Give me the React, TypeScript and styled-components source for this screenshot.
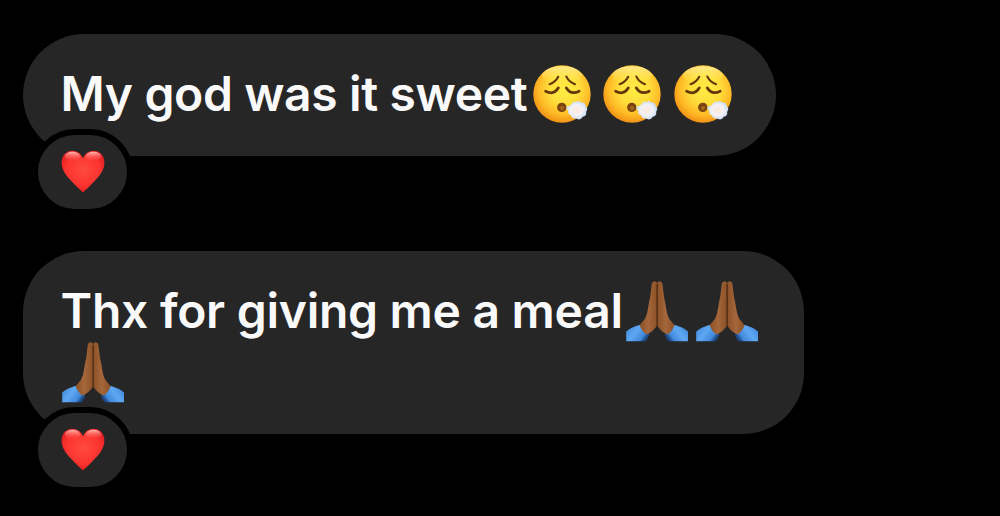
import React from "react";
import styled, { createGlobalStyle } from "styled-components";

const GlobalStyle = createGlobalStyle`
  * {
    box-sizing: border-box;
  }
  body {
    margin: 0;
    background-color: #000000;
    font-family: Inter, "Liberation Sans", sans-serif;
  }
`;

const Thread = styled.main`
  display: flex;
  flex-direction: column;
  align-items: flex-start;
  gap: 95px;
  height: 516px;
  padding: 34px 0 0 23px;
  overflow: hidden;
`;
const Bubble = styled.div<{ $width: number }>`
  position: relative;
  width: ${(props) => props.$width}px;
  padding: 30.5px 35px;
  border-radius: 61px;
  background-color: #262626;
`;
const Message = styled.p`
  display: flex;
  flex-wrap: wrap;
  margin: 0;
`;
const Text = styled.span<{ $width: number; $spacing: number }>`
  width: ${(props) => props.$width}px;
  height: 61px;
  padding-left: 2.5px;
  color: #f9f9f9;
  font-size: 48px;
  font-weight: 600;
  line-height: 57px;
  letter-spacing: ${(props) => props.$spacing}px;
  white-space: nowrap;
`;
const Emoji = styled.svg`
  display: block;
  flex: none;
  width: 70.4px;
  height: 61px;
  overflow: visible;
`;
const Reaction = styled.div`
  position: absolute;
  left: 9px;
  bottom: -58.5px;
  display: flex;
  align-items: center;
  justify-content: center;
  width: 101px;
  height: 85.5px;
  border: 6px solid #000000;
  border-radius: 43px;
  background-color: #262626;
`;
const HeartIcon = styled.svg`
  display: block;
  width: 44px;
  height: 43px;
`;

function Exhaling() {
  return (
    <Emoji viewBox="0 0 70.4 61">
      <defs>
        <radialGradient id="face" cx="0.54" cy="0.42" r="0.6">
          <stop offset="0" stopColor="#ffec45" />
          <stop offset="0.45" stopColor="#ffdd3a" />
          <stop offset="0.75" stopColor="#feba26" />
          <stop offset="1" stopColor="#f08d14" />
        </radialGradient>
        <linearGradient id="shine" x1="0" y1="0" x2="0" y2="1">
          <stop offset="0" stopColor="#fff3a8" stopOpacity="0.8" />
          <stop offset="1" stopColor="#fff04e" stopOpacity="0" />
        </linearGradient>
        <radialGradient id="puff">
          <stop offset="0" stopColor="#fdeadb" />
          <stop offset="0.6" stopColor="#f3f1f5" />
          <stop offset="1" stopColor="#c9dcf4" />
        </radialGradient>
      </defs>
      <circle cx="35" cy="29" r="28.7" fill="url(#face)" />
      <ellipse cx="35" cy="10.3" rx="20" ry="9" fill="url(#shine)" />
      <g fill="none" stroke="#64380b" strokeLinecap="round" strokeWidth="2.2">
        <path d="M22.6 19.2Q28.4 17.2 31.2 11.8" />
        <path d="M39.4 11.6Q42 17 48 19.2" />
        <path d="M18.6 26.2Q26.8 30.6 31.4 22.8" strokeWidth="2.7" />
        <path d="M39.2 22.8Q43.8 30.4 52.2 26.2" strokeWidth="2.7" />
      </g>
      <circle cx="34.8" cy="42.4" r="4.7" fill="#7c4410" />
      <circle cx="35" cy="43" r="1.9" fill="#a66a1d" />
      <path
        d="M39.2 41.6Q42.6 41.2 44.4 39.4Q45.5 35.8 49.2 36.9Q52.2 34.6 54.4 37.5Q58.6 37 58.6 41Q61.6 43.2 59.2 46.8Q59.8 51.4 55.8 51.8Q53.2 56 49.4 53.4Q44.8 54.2 44 50.2Q40.4 49.6 41.4 45.8Q39.2 44.8 39.2 41.6Z"
        fill="url(#puff)"
      />
    </Emoji>
  );
}

function FoldedHands() {
  return (
    <Emoji viewBox="0 0 70.4 61">
      <defs>
        <linearGradient id="sleeve" x1="0" y1="0" x2="1" y2="0.5">
          <stop offset="0" stopColor="#3b83d6" />
          <stop offset="0.5" stopColor="#5ea8f3" />
          <stop offset="0.85" stopColor="#4189dc" />
          <stop offset="1" stopColor="#1b4884" />
        </linearGradient>
        <linearGradient id="skin" x1="0" y1="0" x2="1" y2="0">
          <stop offset="0" stopColor="#8a5024" />
          <stop offset="0.5" stopColor="#a5673b" />
          <stop offset="1" stopColor="#8c5128" />
        </linearGradient>
        <g id="arm">
          <path
            d="M4.2 59.2V49.4Q10.5 44.6 19 42.6L27.5 52.5Q25.5 57.5 23.5 59.2Z"
            fill="url(#sleeve)"
          />
          <path
            d="M35 1Q34.4 -1 32.3 -0.8Q30 -0.4 29.7 2.5L28.2 15Q26.9 20 26 26.5Q25.2 33 22.8 37L17.6 43.2Q20 49.6 24.6 52.6Q31.5 49.6 35 43.6Z"
            fill="url(#skin)"
          />
        </g>
      </defs>
      <use href="#arm" />
      <use href="#arm" transform="translate(70.2 0) scale(-1 1)" />
      <path d="M35.1 2V44" stroke="#512b10" strokeWidth="1.3" />
    </Emoji>
  );
}

function Heart() {
  return (
    <HeartIcon viewBox="0 0 44 43">
      <defs>
        <radialGradient id="heart" cx="0.5" cy="0.45" r="0.6">
          <stop offset="0" stopColor="#ff4a3e" />
          <stop offset="0.65" stopColor="#fb3430" />
          <stop offset="1" stopColor="#dc1a20" />
        </radialGradient>
        <linearGradient id="gloss" x1="0" y1="0" x2="0" y2="1">
          <stop offset="0" stopColor="#ffc9c2" stopOpacity="0.9" />
          <stop offset="1" stopColor="#ff5a4e" stopOpacity="0" />
        </linearGradient>
      </defs>
      <path
        d="M22 42.3C19.5 40.5 14.5 35.8 9 29.6C3.5 23.4 0.6 18.5 0.6 12.4C0.6 5.5 5.2 0.7 11.3 0.7C16.2 0.7 20.2 3.6 22 8.6C23.8 3.6 27.8 0.7 32.7 0.7C38.8 0.7 43.4 5.5 43.4 12.4C43.4 18.5 40.5 23.4 35 29.6C29.5 35.8 24.5 40.5 22 42.3Z"
        fill="url(#heart)"
      />
      <ellipse cx="11.5" cy="6.4" rx="7.6" ry="4.6" fill="url(#gloss)" />
      <ellipse cx="32.5" cy="6.4" rx="7.6" ry="4.6" fill="url(#gloss)" />
    </HeartIcon>
  );
}

function App() {
  return (
    <>
      <GlobalStyle />
      <Thread>
        <Bubble $width={753}>
          <Message>
            <Text $width={469} $spacing={-0.37}>
              My god was it sweet
            </Text>
            <Exhaling />
            <Exhaling />
            <Exhaling />
          </Message>
          <Reaction>
            <Heart />
          </Reaction>
        </Bubble>
        <Bubble $width={781}>
          <Message>
            <Text $width={564} $spacing={-0.27}>
              Thx for giving me a meal
            </Text>
            <FoldedHands />
            <FoldedHands />
            <FoldedHands />
          </Message>
          <Reaction>
            <Heart />
          </Reaction>
        </Bubble>
      </Thread>
    </>
  );
}

export default App;
